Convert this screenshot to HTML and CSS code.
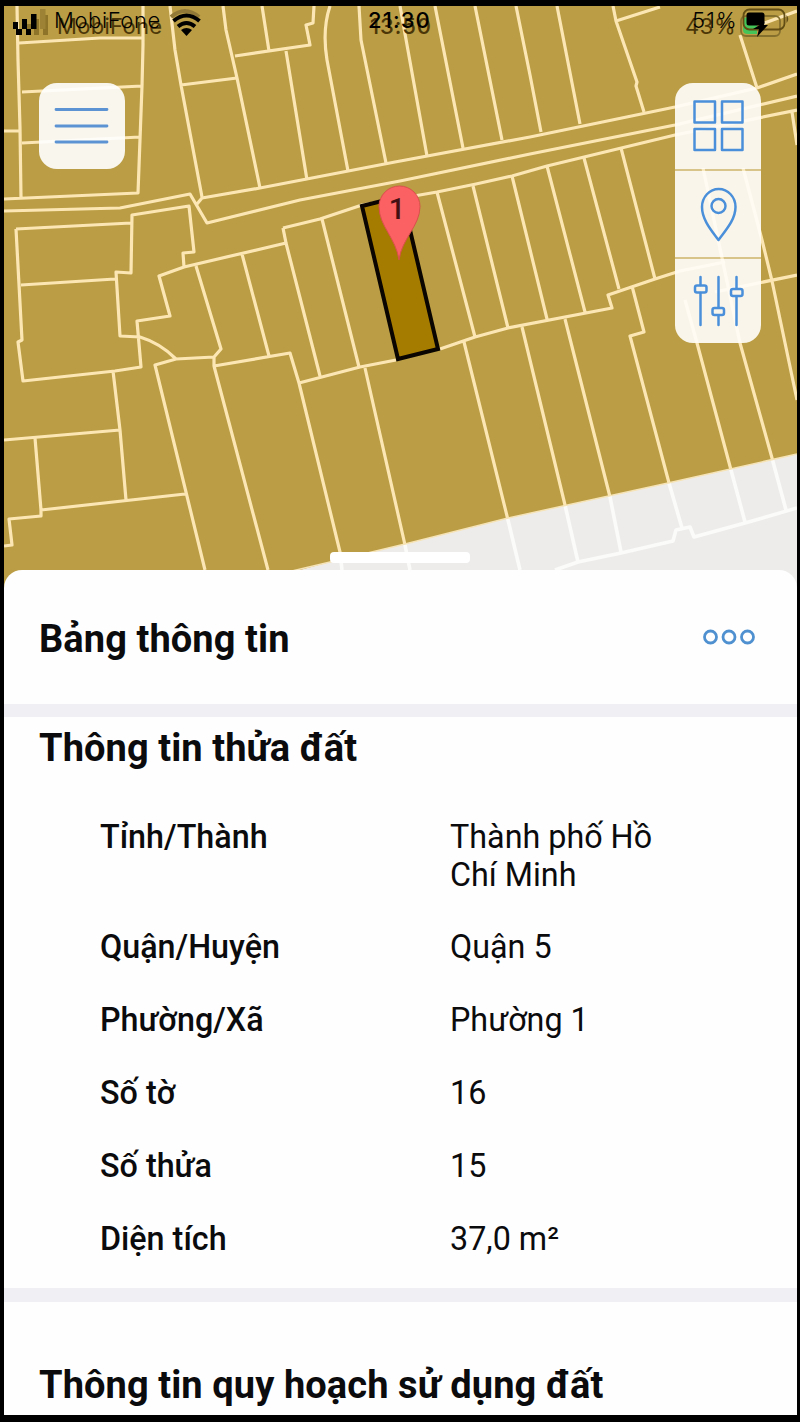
FILE: index.html
```html
<!DOCTYPE html>
<html lang="vi">
<head>
<meta charset="utf-8">
<title>Bảng thông tin</title>
<link rel="stylesheet" href="styles.css">
</head>
<body>
<div class="screen">
  <div class="map">
    <svg class="map-canvas" viewBox="4 6 793 586">
      <defs>
        <g id="parcels">
          <path d="M17 6 18 60 20 128 21 198M19 43 100 38H143M22 92 142 86M4 131H20M22 143 140 137M143 6V45L142 86 138 193 4 199M170 6 175 50 181 85 202 197M181 85 237 78M223 6 226 30 237 78 260 188M235 56 268 51M262 6 269 51M314 6 313 23 306 25 310 45 235 56M286 51 307 180M330 6Q322 30 327 60L348 171M359 6 361 40 386 163M400 6 427 156M435 6 463 148M475 6 502 140M516 6 530 75 541 132M557 6 580 124M613 6 616 21 637 82 636 86 644 112M616 21 660 7M740 35 757 88M762 24 797 11"/>
          <path d="M197 204 202 198 260 188 395 162 530 137 675 107 757 88 797 74M4 211 120 208 190 194 207 223 300 200 400 181 530 154 675 125 797 96M283 228 320 219 362 205 437 192 476 184 512 176 547 166 675 135 797 110M792 112 797 145"/>
          <path d="M16 229 131 223M16 229 22 340 18 342 23 381 115 371 141 367 137 321 170 316 159 276 184 267 183 253 194 252 189 206 132 215 131 273 116 272 120 336 140 337Q160 343 176 359L214 357 221 349 196 266M21 285 115 279M184 267 286 243M242 254 269 356M214 357V366L290 353 299 383 360 367 396 360M214 366 268 570M176 359 155 365 205 570M113 371 120 430 126 500M4 440 120 430M35 438 41 510 185 494M41 510V516L9 519 12 545 4 546M283 228 286 243 320 376M322 219 359 367M299 383 340 552 342 570M365 368 405 545 410 570"/>
          <path d="M440 349 475 337 508 328 612 308 608 295 655 279 680 271 725 262M715 292 797 275M437 192 475 337M473 186 508 328M512 176 547 319M547 166 585 312M584 158 619 289M621 148 655 279M464 342 508 520 520 570M522 327 565 505 578 562M565 319 610 497 621 552M632 286 644 332 630 336 669 483 682 528M685 300 697 343 731 470 745 522M703 168 740 343 772 458 786 510M743 168 762 240 772 281 797 400"/>
          <path d="M555 570 578 562 621 553 673 541 676 530 690 527 694 537 745 523 797 508"/>
        </g>
        <clipPath id="street"><path d="M300 570 330 562 405 544 508 518 668 483 797 454V592H300Z"/></clipPath>
      </defs>
      <rect class="zone" x="4" y="6" width="793" height="586"/>
      <use class="lines" href="#parcels"/>
      <path class="street" d="M300 570 330 562 405 544 508 518 668 483 797 454V592H300Z"/>
      <g clip-path="url(#street)"><use class="lines lines-light" href="#parcels"/></g>
      <path class="edge" d="M292 571 330 562 405 544 508 518 668 483 797 454"/>
      <path class="selected" d="M362 206 402 196 438 349 398 359Z"/>
      <path class="pin" d="M399 260C396 238 379 226 379 206.500A20.500 20.500 0 0 1 420 206.500C420 226 402 238 399 260Z"/>
      <text class="pin-label" x="397" y="219">1</text>
    </svg>

    <div class="button menu">
      <svg width="86" height="86" viewBox="39 83 86 86"><path class="icon menu-icon" d="M56 109.500H107M56 126H107M56 142H107"/></svg>
    </div>
    <div class="tools">
      <div class="tool"><svg width="86" height="86" viewBox="675 83 86 86"><path class="icon" d="M694.500 101.500H715V122.500H694.500ZM722 101.500H742.500V122.500H722ZM694.500 129H715V150H694.500ZM722 129H742.500V150H722Z"/></svg></div>
      <div class="tool"><svg width="86" height="86" viewBox="675 171 86 86"><path class="icon" d="M718.500 240C712 231 702 220 702 207A16.700 18 0 0 1 735.500 207C735.500 220 725 231 718.500 240Z"/><circle class="icon" cx="718.500" cy="206" r="7"/></svg></div>
      <div class="tool"><svg width="86" height="86" viewBox="675 259 86 86"><path class="icon" d="M700.500 277V285M700.500 293V325M718.500 277V307M718.500 316V325M736.500 277V288M736.500 297V325"/><rect class="icon" x="695" y="285.500" width="11.500" height="7" rx="2"/><rect class="icon" x="712.500" y="308" width="11.500" height="7" rx="2"/><rect class="icon" x="731" y="289" width="11.500" height="7" rx="2"/></svg></div>
    </div>
    <div class="handle"></div>
  </div>

  <div class="status">
    <svg class="status-icons" viewBox="4 6 793 36">
      <path class="bar-old" d="M17 29H22V35H17ZM26 24H31V35H26ZM34 19H39V35H34ZM43 15H48V35H43Z"/>
      <path d="M13 22H18V29H13ZM16 29H22V35H16ZM22 24H27V29H22ZM26 29H31V35H26ZM22 19H27V29H22ZM31 14H36.500V29H31Z"/>
      <path class="bar-off" d="M40 9H45.500V29H40Z"/>
      <path class="wifi-ghost" d="M171 17Q185 5 199 17"/>
      <path class="wifi" d="M173.500 21Q186.500 10 199.500 21M178 26.500Q186.500 19.500 195 26.500"/>
      <path d="M181 30Q186.500 26 192 30L186.500 36Z"/>
      <rect class="battery-ghost" x="741" y="16" width="39" height="20" rx="5"/>
      <path class="charge" d="M743 20Q744 17 748 17H757V34H748Q743 34 743 30Z"/>
      <rect class="battery" x="743.500" y="9.500" width="41" height="20" rx="6"/>
      <path class="cap" d="M786.500 15Q790 19 786.500 23Z"/>
      <rect x="746.500" y="12.500" width="18" height="13" rx="2.500"/>
      <path d="M765 22 753 29H759L757 37 768 25H762Z"/>
    </svg>
    <span class="ghost carrier-ghost">MobiFone</span><span class="carrier">MobiFone</span>
    <span class="ghost time-ghost">13:50</span><span class="time">21:30</span>
    <span class="ghost level-ghost">43%</span><span class="level">51%</span>
  </div>

  <div class="sheet">
    <div class="sheet-head">
      <h1>Bảng thông tin</h1>
      <svg class="more" viewBox="0 0 52 16"><circle cx="7.500" cy="8" r="6"/><circle cx="26" cy="8" r="6"/><circle cx="44.500" cy="8" r="6"/></svg>
    </div>
    <section class="parcel">
      <h2>Thông tin thửa đất</h2>
      <dl class="facts">
        <dt>Tỉnh/Thành</dt><dd>Thành phố Hồ<br>Chí Minh</dd>
        <dt>Quận/Huyện</dt><dd>Quận 5</dd>
        <dt>Phường/Xã</dt><dd>Phường 1</dd>
        <dt>Số tờ</dt><dd>16</dd>
        <dt>Số thửa</dt><dd>15</dd>
        <dt>Diện tích</dt><dd>37,0 m²</dd>
      </dl>
    </section>
    <section class="planning">
      <h2>Thông tin quy hoạch sử dụng đất</h2>
    </section>
  </div>
</div>
</body>
</html>
```
FILE: styles.css
```css
* { box-sizing: border-box; }
body {
  margin: 0;
  background: #000;
  font-family: Roboto, "Liberation Sans", sans-serif;
  color: #0b0b0d;
}
.screen {
  position: relative;
  height: 1422px;
  border: solid #000;
  border-width: 6px 3px 7px 4px;
  overflow: hidden;
}
.map { position: relative; height: 564px; }
.map-canvas { display: block; width: 793px; height: 586px; }
.zone { fill: #ba9d44; }
.street { fill: #edeceb; }
.lines { fill: none; stroke: #fce7b4; stroke-width: 3.2; stroke-linejoin: round; }
.lines-light { stroke: #fbfbfa; stroke-width: 3.6; }
.edge { fill: none; stroke: #f6e3b6; stroke-width: 1.5; }
.selected { fill: #a67c00; stroke: #0a0500; stroke-width: 4; }
.pin { fill: #fb6062; stroke: #d9504c; stroke-width: 1; }
.pin-label { font: 500 29px Roboto, sans-serif; fill: #421013; text-anchor: middle; }

.button, .tools {
  position: absolute;
  top: 77px;
  width: 86px;
  border-radius: 18px;
  overflow: hidden;
}
.menu { left: 34.5px; height: 86px; background: rgba(255, 255, 255, .91); }
.tools { left: 671px; display: flex; flex-direction: column; gap: 2px; height: 260px; }
.tool { flex: 1; background: rgba(255, 253, 249, .92); box-shadow: 0 2px rgba(245, 235, 205, .5); }
.tool svg, .menu svg { display: block; }
.icon { fill: none; stroke: #4a8fd9; stroke-width: 2.5; stroke-linejoin: round; stroke-linecap: round; }
.menu-icon { stroke: #5c93d2; stroke-width: 2.8; }
.handle {
  position: absolute;
  left: 326px;
  top: 546px;
  width: 140px;
  height: 11px;
  border-radius: 4px;
  background: #fff;
}

.status { position: absolute; inset: 0 0 auto; height: 36px; color: #000; font-family: Inter, sans-serif; font-size: 22px; line-height: 26px; }
.status-icons { position: absolute; left: 0; top: 0; width: 793px; height: 36px; }
.status span { position: absolute; top: 1px; white-space: nowrap; }
.status .ghost { top: 7px; color: #4b3608; }
.status .carrier { left: 50px; font-weight: 300; letter-spacing: .6px; }
.status .carrier-ghost { left: 53px; font-weight: 400; letter-spacing: .3px; }
.status .time { left: 364px; font-weight: 500; letter-spacing: 1.1px; }
.status .time-ghost { left: 366px; font-weight: 500; letter-spacing: .9px; }
.status .level { left: 688px; font-weight: 300; letter-spacing: 1.2px; }
.status .level-ghost { left: 681px; font-weight: 400; letter-spacing: .6px; }
.bar-old { fill: #8d7429; }
.bar-off { fill: #9d8235; }
.wifi { fill: none; stroke: #000; stroke-width: 4; }
.wifi-ghost { fill: none; stroke: #927938; stroke-width: 4; }
.battery, .battery-ghost { fill: none; stroke: #624d14; stroke-width: 1.8; }
.battery-ghost { stroke: #86702e; }
.cap { fill: #624d14; }
.charge { fill: #45c559; }

.sheet {
  position: relative;
  height: 850px;
  border-radius: 18px 18px 0 0;
  background: #fefefe;
}
.sheet-head {
  display: flex;
  justify-content: space-between;
  align-items: center;
  height: 134px;
  padding: 4px 42px 0 35px;
}
h1, h2 { margin: 0; font-size: 38px; font-weight: 700; line-height: 44px; letter-spacing: .09px; white-space: nowrap; }
.more { width: 52px; height: 16px; margin-bottom: 5px; fill: none; stroke: #4f91d0; stroke-width: 2.8; }
.parcel {
  padding: 9px 35px 30px;
  border: solid #efeff4;
  border-width: 13px 0 14px;
}
.facts {
  display: grid;
  grid-template-columns: 350px 260px;
  row-gap: 34.9px;
  margin: 47.5px 0 0 61px;
  font-size: 32.3px;
  line-height: 38px;
}
dt { font-weight: 500; white-space: nowrap; }
dd { margin: 0; }
.planning { padding: 61px 35px 0; }
```
